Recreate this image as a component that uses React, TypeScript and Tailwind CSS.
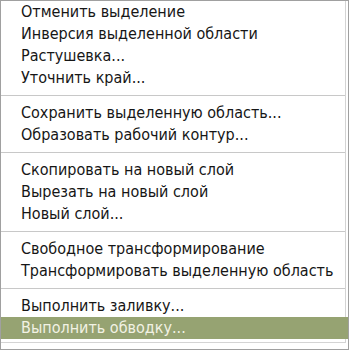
const groups: string[][] = [
  ["Отменить выделение", "Инверсия выделенной области", "Растушевка...", "Уточнить край..."],
  ["Сохранить выделенную область...", "Образовать рабочий контур..."],
  ["Скопировать на новый слой", "Вырезать на новый слой", "Новый слой..."],
  ["Свободное трансформирование", "Трансформировать выделенную область"],
  ["Выполнить заливку...", "Выполнить обводку..."],
];

const active = "Выполнить обводку...";

export default function App() {
  return (
    <div className="w-[350px] h-[351px] bg-white overflow-hidden">
      <div className="w-[349px] h-[350px] border border-[#a0a0a0] flex flex-col">
        <div className="flex-1 flex flex-col border-r border-b border-[#d4d4d4] mr-[2px] mb-[6px]">
          {groups.map((items, gi) => (
            <div key={gi}>
              {gi > 0 && (
                <div className="h-[13px] flex items-center">
                  <div className="h-px w-full bg-[#c8c8c8]" />
                </div>
              )}
              {items.map((label) => (
                <div
                  key={label}
                  className={`h-[22px] flex items-center pl-[20px] text-[16px] whitespace-nowrap font-['DejaVu_Sans_Condensed','DejaVu_Sans',sans-serif] ${
                    label === active ? "bg-[#96a372] text-[#f2f2e4] -mr-[3px]" : "text-[#161616]"
                  }`}
                >
                  {label}
                </div>
              ))}
            </div>
          ))}
        </div>
      </div>
    </div>
  );
}
